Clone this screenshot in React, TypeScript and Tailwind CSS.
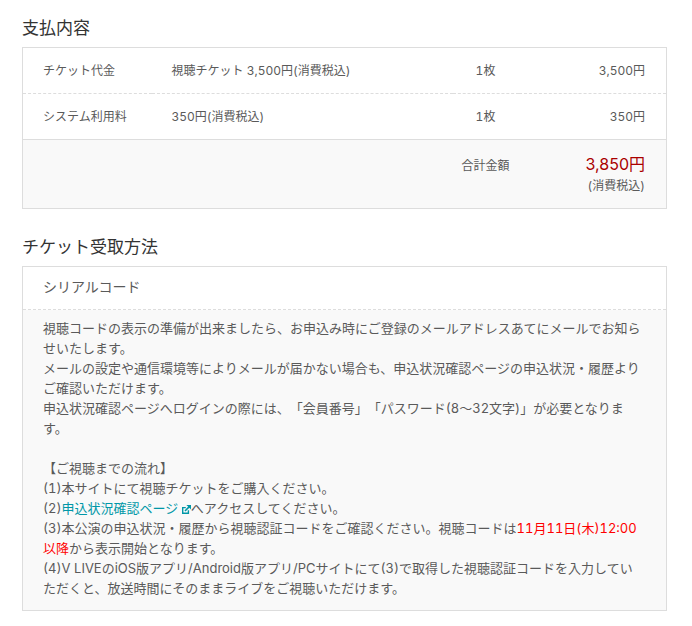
import React from 'react';

interface FeeRow {
    label: string;
    detail: string;
    count: string;
    price: string;
}

const feeRows: FeeRow[] = [
    { label: 'チケット代金', detail: '視聴チケット 3,500円(消費税込)', count: '1枚', price: '3,500円' },
    { label: 'システム利用料', detail: '350円(消費税込)', count: '1枚', price: '350円' },
];

const ExternalIcon: React.FC = () => (
    <svg viewBox="0 0 9 9" className="inline-block w-[9px] h-[9px] align-[-1px]" fill="none" stroke="currentColor" aria-hidden="true">
        <path d="M3.8 2.6H0.7V8.3H6.4V5.2" strokeWidth="1.4" />
        <path d="M3 6L7.6 1.4" strokeWidth="1.6" />
        <path d="M4.4 0H9V4.6Z" fill="currentColor" stroke="none" />
    </svg>
);

const SectionTitle: React.FC<{ children: React.ReactNode }> = ({ children }) => (
    <h2 className="mb-[7px] text-[17px] leading-6 text-[#333]">{children}</h2>
);

const PaymentTable: React.FC = () => (
    <table className="w-full table-fixed border-collapse border border-[#ddd] text-xs leading-5">
        <colgroup>
            <col className="w-[129px]" />
            <col />
            <col className="w-[66px]" />
            <col className="w-[148px]" />
        </colgroup>
        <tbody>
            {feeRows.map((row) => (
                <tr key={row.label} className="border-b border-dashed border-[#ddd] last:border-solid">
                    <th scope="row" className="pt-[13px] pb-3 pl-5 text-left font-normal">{row.label}</th>
                    <td className="pl-5">{row.detail}</td>
                    <td className="text-center">{row.count}</td>
                    <td className="pr-[21px] text-right">{row.price}</td>
                </tr>
            ))}
        </tbody>
        <tfoot>
            <tr className="bg-[#f9f9f9] align-baseline">
                <td colSpan={2}></td>
                <th scope="row" className="text-center font-normal">合計金額</th>
                <td className="pt-3.5 pr-[21px] pb-3 text-right">
                    <span className="block text-base leading-5 proportional-nums text-[#a00]">3,850円</span>
                    <span className="mt-0.5 block">(消費税込)</span>
                </td>
            </tr>
        </tfoot>
    </table>
);

export default function App() {
    return (
        <main
            lang="ja"
            className="bg-white pt-4 pr-[25px] pb-4 pl-[22px] font-['Inter','Noto_Sans_CJK_JP',sans-serif] tabular-nums text-[#5a5a5a] [text-spacing-trim:space-all]"
        >
            <section>
                <SectionTitle>支払内容</SectionTitle>
                <PaymentTable />
            </section>

            <section className="mt-[26px]">
                <SectionTitle>チケット受取方法</SectionTitle>
                <div className="border border-[#ddd]">
                    <h3 className="border-b border-dashed border-[#ddd] px-5 pt-2.5 pb-3 text-sm leading-5">シリアルコード</h3>
                    <div className="bg-[#f9f9f9] pt-2 pr-6 pb-3 pl-5 text-[13px] leading-5">
                        <p>視聴コードの表示の準備が出来ましたら、お申込み時にご登録のメールアドレスあてにメールでお知らせいたします。</p>
                        <p>メールの設定や通信環境等によりメールが届かない場合も、申込状況確認ページの申込状況・履歴よりご確認いただけます。</p>
                        <p>申込状況確認ページへログインの際には、「会員番号」「パスワード(8〜32文字)」が必要となります。</p>
                        <p className="mt-5">【ご視聴までの流れ】</p>
                        <p>(1)本サイトにて視聴チケットをご購入ください。</p>
                        <p>
                            (2)
                            <a href="#status" className="text-[#0097a7]">
                                申込状況確認ページ <ExternalIcon />
                            </a>
                            へアクセスしてください。
                        </p>
                        <p>
                            (3)本公演の申込状況・履歴から視聴認証コードをご確認ください。視聴コードは
                            <span className="text-[#f00]">
                                11月11日(木)12:00<span className="whitespace-nowrap">以降</span>
                            </span>
                            から表示開始となります。
                        </p>
                        <p>(4)V LIVEのiOS版アプリ/Android版アプリ/PCサイトにて(3)で取得した視聴認証コードを入力していただくと、放送時間にそのままライブをご視聴いただけます。</p>
                    </div>
                </div>
            </section>
        </main>
    );
}
